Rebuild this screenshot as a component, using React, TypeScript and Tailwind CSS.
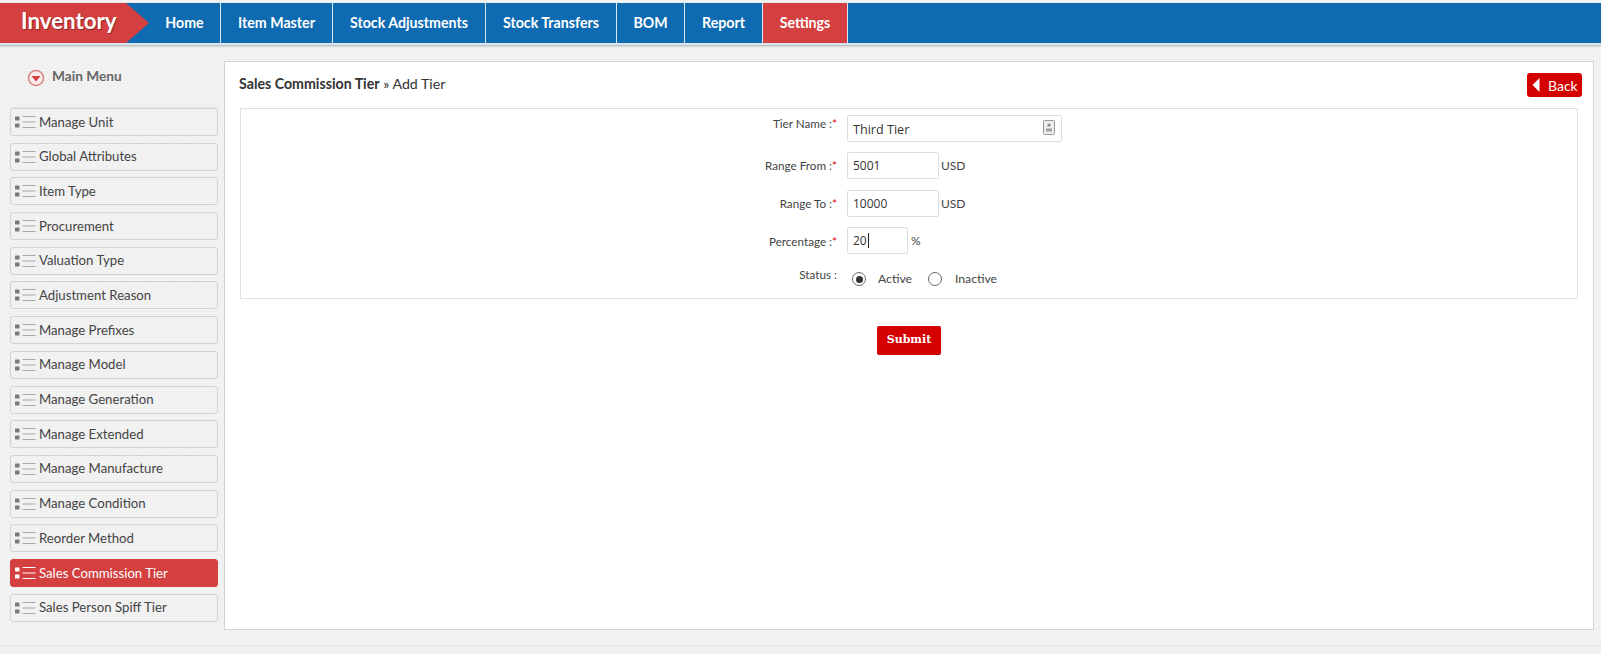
import { IoMdArrowDropleft } from "react-icons/io";

const navItems = [
  { label: "Home", width: "w-[72px]" },
  { label: "Item Master", width: "w-[112px]" },
  { label: "Stock Adjustments", width: "w-[153px]" },
  { label: "Stock Transfers", width: "w-[131px]" },
  { label: "BOM", width: "w-[68px]" },
  { label: "Report", width: "w-[78px]" },
];

const menuItems = [
  "Manage Unit",
  "Global Attributes",
  "Item Type",
  "Procurement",
  "Valuation Type",
  "Adjustment Reason",
  "Manage Prefixes",
  "Manage Model",
  "Manage Generation",
  "Manage Extended",
  "Manage Manufacture",
  "Manage Condition",
  "Reorder Method",
  "Sales Commission Tier",
  "Sales Person Spiff Tier",
];

function ListIcon({ active }: { active: boolean }) {
  return (
    <svg width="21" height="14" viewBox="0 0 21 14" className="shrink-0">
      <g fill={active ? "#ffffff" : "#7a7a7a"}>
        <rect x="0" y="1.5" width="4.5" height="4" rx="0.5" />
        <rect x="0" y="8.5" width="4.5" height="4" rx="0.5" />
      </g>
      <g fill={active ? "#ffffff" : "#a8a8a8"}>
        <rect x="7.5" y="1" width="13" height="1" />
        <rect x="7.5" y="6.5" width="13" height="1" />
        <rect x="7.5" y="12" width="13" height="1" />
      </g>
    </svg>
  );
}

function FieldLabel({ text, required }: { text: string; required?: boolean }) {
  return (
    <div className="w-[597px] pr-px text-right text-[11.7px] leading-[15px] text-[#444444]">
      {text} :{required && <span className="text-[#d40000]">*</span>}
    </div>
  );
}

const inputClass =
  "h-[27px] rounded-[2px] border border-[#dddddd] bg-white px-[5px] font-['Open_Sans',sans-serif] text-[12px] text-[#333333] outline-none";

export default function App() {
  return (
    <div className="flex h-[654px] w-[1601px] flex-col overflow-hidden bg-[#f3f3f3] bg-[repeating-linear-gradient(0deg,rgba(0,0,0,0.012)_0,rgba(0,0,0,0.012)_1px,transparent_1px,transparent_3px),repeating-linear-gradient(90deg,rgba(0,0,0,0.012)_0,rgba(0,0,0,0.012)_1px,transparent_1px,transparent_3px)] font-['Lato',sans-serif]">
      <header className="mt-[3px] flex h-[42px] shrink-0 border-b-2 border-[#d9e6f0] bg-[#0f6bb1] shadow-[0_1px_2px_rgba(0,0,0,0.3)]">
        <div className="relative flex h-[40px] w-[149px] items-center bg-[#d43f3f] pb-[3px] pl-[21px] [clip-path:polygon(0_0,126px_0,149px_20px,126px_40px,0_40px)]">
          <span className="text-[22.3px] font-bold leading-none text-white [text-shadow:1px_1px_1px_rgba(0,0,0,0.35)]">
            Inventory
          </span>
        </div>
        {navItems.map((item) => (
          <a
            key={item.label}
            className={`${item.width} flex h-[40px] items-center justify-center border-r border-[#dbe8f2] text-[14.2px] font-bold text-white`}
          >
            {item.label}
          </a>
        ))}
        <a className="flex h-[40px] w-[85px] items-center justify-center border-r border-[#dbe8f2] bg-[#d43f3f] text-[14.2px] font-bold text-white">
          Settings
        </a>
      </header>

      <div className="flex min-h-0 flex-1">
        <aside className="w-[224px] shrink-0 pl-[10px]">
          <div className="mr-[6px] flex h-[63px] items-start border-b border-[#e4e4e4] pl-[17px] pt-[23px]">
            <svg width="18" height="18" viewBox="0 0 18 18" className="mt-px">
              <circle cx="9" cy="9" r="7.5" fill="#fbeaea" stroke="#d98080" strokeWidth="1.5" />
              <path d="M4.5 7h9L9 12.5z" fill="#d43f3f" />
            </svg>
            <span className="ml-[7px] -mt-px text-[13.7px] font-bold leading-[18px] text-[#666666]">Main Menu</span>
          </div>
          <ul className="flex w-[208px] flex-col gap-[6.7px]">
            {menuItems.map((name) => {
              const active = name === "Sales Commission Tier";
              return (
                <li
                  key={name}
                  className={`flex h-[28px] items-center gap-[3px] rounded-[3px] border pl-[4px] text-[13.2px] ${
                    active
                      ? "border-[#d43f3f] bg-[#d43f3f] text-white"
                      : "border-[#d2d2d2] bg-[#f1f1f1] text-[#444444]"
                  }`}
                >
                  <ListIcon active={active} />
                  <span className="pt-px">{name}</span>
                </li>
              );
            })}
          </ul>
        </aside>

        <main className="mt-[16px] h-[569px] w-[1370px] border border-[#d4d4d4] bg-white px-[15px]">
          <div className="flex h-[46px] items-start justify-between">
            <h2 className="-ml-px pt-[13px] text-[14.2px] leading-[18px] text-[#333333]">
              <b>Sales Commission Tier</b> » Add Tier
            </h2>
            <button className="-mr-[4px] mt-[11px] flex h-[24px] w-[55px] items-center rounded-[3px] bg-[#d40000] text-[14px] text-white">
              <IoMdArrowDropleft className="-ml-[5px] h-[28px] w-[28px] shrink-0" />
              <span className="-ml-[2px]">Back</span>
            </button>
          </div>

          <section className="h-[191px] border border-[#e0e0e0] pt-[6px]">
            <div className="flex h-[27px]">
              <div className="pt-px">
                <FieldLabel text="Tier Name" required />
              </div>
              <div className="relative ml-[9px]">
                <input readOnly value="Third Tier" className={`${inputClass} w-[215px] pt-[2px] !text-[12.6px]`} />
                <svg width="12" height="15" viewBox="0 0 12 15" className="absolute right-[7px] top-[5px]">
                  <rect x="0.5" y="0.5" width="11" height="14" rx="1" fill="#ececec" stroke="#999999" />
                  <circle cx="6" cy="5" r="1.6" fill="#8a8a8a" />
                  <rect x="3" y="8.5" width="6" height="3" fill="#a0a0a0" />
                </svg>
              </div>
            </div>

            <div className="mt-[10px] flex h-[27px] items-center">
              <FieldLabel text="Range From" required />
              <input readOnly value="5001" className={`${inputClass} ml-[9px] w-[92px]`} />
              <span className="ml-[2px] text-[12px] text-[#444444]">USD</span>
            </div>

            <div className="mt-[11px] flex h-[27px] items-center">
              <FieldLabel text="Range To" required />
              <input readOnly value="10000" className={`${inputClass} ml-[9px] w-[92px]`} />
              <span className="ml-[2px] text-[12px] text-[#444444]">USD</span>
            </div>

            <div className="mt-[10px] flex h-[27px] items-center">
              <div className="pt-[2px]">
                <FieldLabel text="Percentage" required />
              </div>
              <div className={`${inputClass} ml-[9px] flex w-[61px] items-center`}>
                20<span className="ml-px h-[15px] w-px bg-[#222222]" />
              </div>
              <span className="ml-[3px] text-[12px] text-[#444444]">%</span>
            </div>

            <div className="mt-[13px] flex h-[20px] items-start">
              <FieldLabel text="Status" />
              <div className="ml-[9px] flex items-center pl-[5px] pt-[3px] text-[12.2px] text-[#444444]">
                <span className="flex h-[14px] w-[14px] items-center justify-center rounded-full border border-[#666666]">
                  <span className="h-[7px] w-[7px] rounded-full bg-[#333333]" />
                </span>
                <span className="ml-[12px]">Active</span>
                <span className="ml-[16px] h-[14px] w-[14px] rounded-full border border-[#666666]" />
                <span className="ml-[13px]">Inactive</span>
              </div>
            </div>
          </section>

          <div className="mt-[27px] flex pl-[637px]">
            <button className="h-[29px] w-[64px] rounded-[2px] bg-[#d40000] font-['DejaVu_Serif',serif] text-[11px] font-bold text-white">
              Submit
            </button>
          </div>
        </main>
      </div>

      <div className="h-[9px] shrink-0 border-t border-[#e6e6e6] bg-[#efefef]" />
    </div>
  );
}
